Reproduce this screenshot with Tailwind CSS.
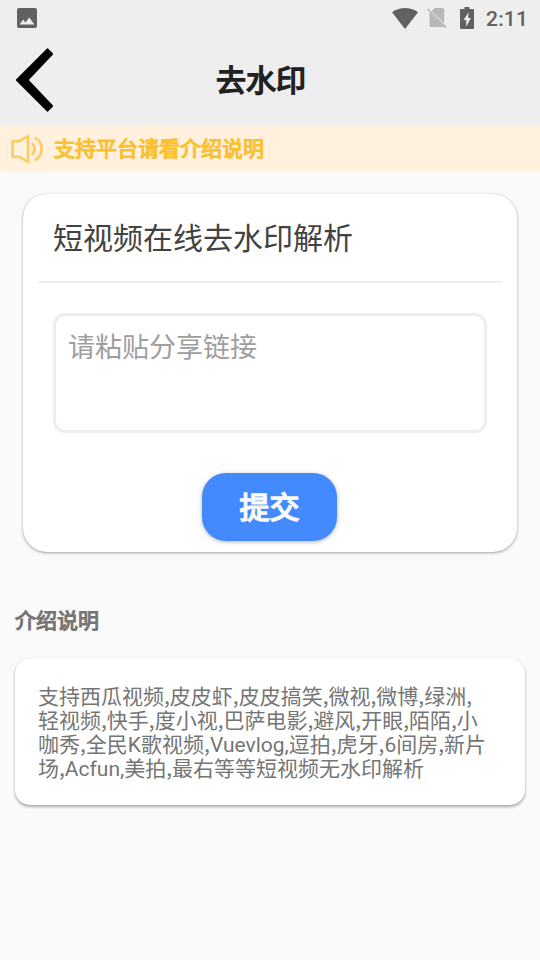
<!DOCTYPE html>
<html lang="zh-CN">
<head>
<meta charset="utf-8">
<title>去水印</title>
<script src="https://cdn.jsdelivr.net/npm/@tailwindcss/browser@4"></script>
</head>
<body class="w-[540px] h-[960px] overflow-hidden bg-[#fafafa] font-['Noto_Sans_CJK_SC',sans-serif]">
<header class="h-[126px] bg-[#eeeeee]">
  <div class="h-9 flex items-center justify-between pl-[17px] pr-[13px] text-[#616161]">
    <svg class="w-5 h-5" viewBox="0 0 20 20"><rect width="20" height="20" rx="2" fill="#616161"/><path d="M2.500 16.500 6.200 11.700 8.500 14.500 12.300 9.500 17.300 16.500Z" fill="#eee"/></svg>
    <div class="flex items-center">
      <svg class="w-[26px] h-[21px]" viewBox="0 0 26 21"><path d="M0 4.200Q13-4.200 26 4.200L13 21Z" fill="#616161"/></svg>
      <svg class="w-5 h-5 ml-[9px]" viewBox="0 0 20 20"><path d="M8 0H15.500Q17.200 0 17.200 1.700V15.200L4.700 2.900ZM2.500 4.200 17 18.400Q16.500 19 15.500 19H4Q2.500 19 2.500 17.500Z" fill="#b7b7b7"/><path d="M.7 1 19.300 19.600" stroke="#b7b7b7" stroke-width="1.700"/></svg>
      <svg class="w-[14px] h-[22px] ml-[13px] mr-px" viewBox="0 0 14 22"><path d="M4.500 0h5v2H13q1 0 1 1v18q0 1-1 1H1q-1 0-1-1V3q0-1 1-1h3.500Z" fill="#616161"/><path d="M8.500 5.500 3.500 13H6.200v6.500L11 11H8.200Z" fill="#eee"/></svg>
      <span class="ml-[11px] w-[41px] font-[Roboto] font-medium text-[21px] leading-6 tracking-[.2px] pt-0.5">2:11</span>
    </div>
  </div>
  <div class="h-[90px] flex pt-3 pl-4">
    <svg class="w-[38px] h-16" viewBox="0 0 38 64"><path d="M31 0.500Q31.500 0 32 0.500L37 5.500 37 6.500 12.800 32 37 57.500V58.500L32 63.500Q31.500 64 31 63.500L0 32.500V31.500Z" fill="#000"/></svg>
    <h1 class="ml-[162px] pt-2 text-[30px] leading-[44px] text-[#212121] [-webkit-text-stroke:1.500px_#212121]">去水印</h1>
  </div>
</header>
<div class="h-[45px] bg-[#fff1de] flex items-center pl-[11px] text-[#fbc02d]">
  <svg class="w-8 h-[30px]" viewBox="0 0 32 30" fill="none" stroke="#ffcb5c" stroke-width="2.600" stroke-linejoin="round" stroke-linecap="round"><path d="M1.500 7.300H8L17 2V28L8 22.700H1.500Z"/><path d="M21.500 10Q25.500 15 21.500 20M24.500 4.200C32.500 8 32.500 22 24.500 25.800"/></svg>
  <p class="ml-[11px] pb-1 text-[21px] leading-[30px] [-webkit-text-stroke:1.100px_#fbc02d]">支持平台请看介绍说明</p>
</div>
<main class="pt-[23px]">
  <section class="mx-[23px] h-[358px] bg-white rounded-[24px] shadow-[0_1px_3px_rgba(0,0,0,0.35),0_0_1px_rgba(0,0,0,0.15)] px-[15px]">
    <h2 class="h-[87px] pl-[15px] pt-5 text-[30px] leading-[44px] text-[#424242]">短视频在线去水印解析</h2>
    <hr class="border-0 h-[2px] bg-[#eeeeee]">
    <div class="mx-[15px] mt-[30px] h-[120px] border-[3px] border-[#eeeeee] rounded-[12px] pl-3 pt-[11px] text-[27px] leading-[38px] text-[#9e9e9e]">请粘贴分享链接</div>
    <button class="block ml-[164px] mt-10 w-[135px] h-[68px] pb-1 rounded-[24px] bg-[#448aff] text-[#fafafa] text-[30px] leading-[44px] shadow-[0_1px_4px_rgba(0,0,0,0.3)] [-webkit-text-stroke:1.500px_#fafafa]">提交</button>
  </section>
  <h3 class="mt-[52px] ml-[15px] text-[21px] leading-[30px] text-[#757575] [-webkit-text-stroke:1.100px_#757575]">介绍说明</h3>
  <section class="mx-[15px] mt-6 h-[147px] bg-white rounded-[15px] shadow-[0_2px_3px_rgba(0,0,0,0.32),0_0_1px_rgba(0,0,0,0.15)] pl-[23px] pt-[25px] text-[21px] leading-6 text-[#757575] whitespace-nowrap">
    <p class="h-6">支持西瓜视频,皮皮虾,皮皮搞笑,微视,微博,绿洲,</p>
    <p class="h-6">轻视频,快手,度小视,巴萨电影,避风,开眼,陌陌,小</p>
    <p class="h-6">咖秀,全民<span class="font-[Roboto] leading-none">K</span>歌视频,<span class="font-[Roboto] leading-none">Vuevlog,</span>逗拍,虎牙,<span class="font-[Roboto] leading-none">6</span>间房,新片</p>
    <p class="h-6">场,<span class="font-[Roboto] leading-none">Acfun,</span>美拍,最右等等短视频无水印解析</p>
  </section>
</main>
</body>
</html>
